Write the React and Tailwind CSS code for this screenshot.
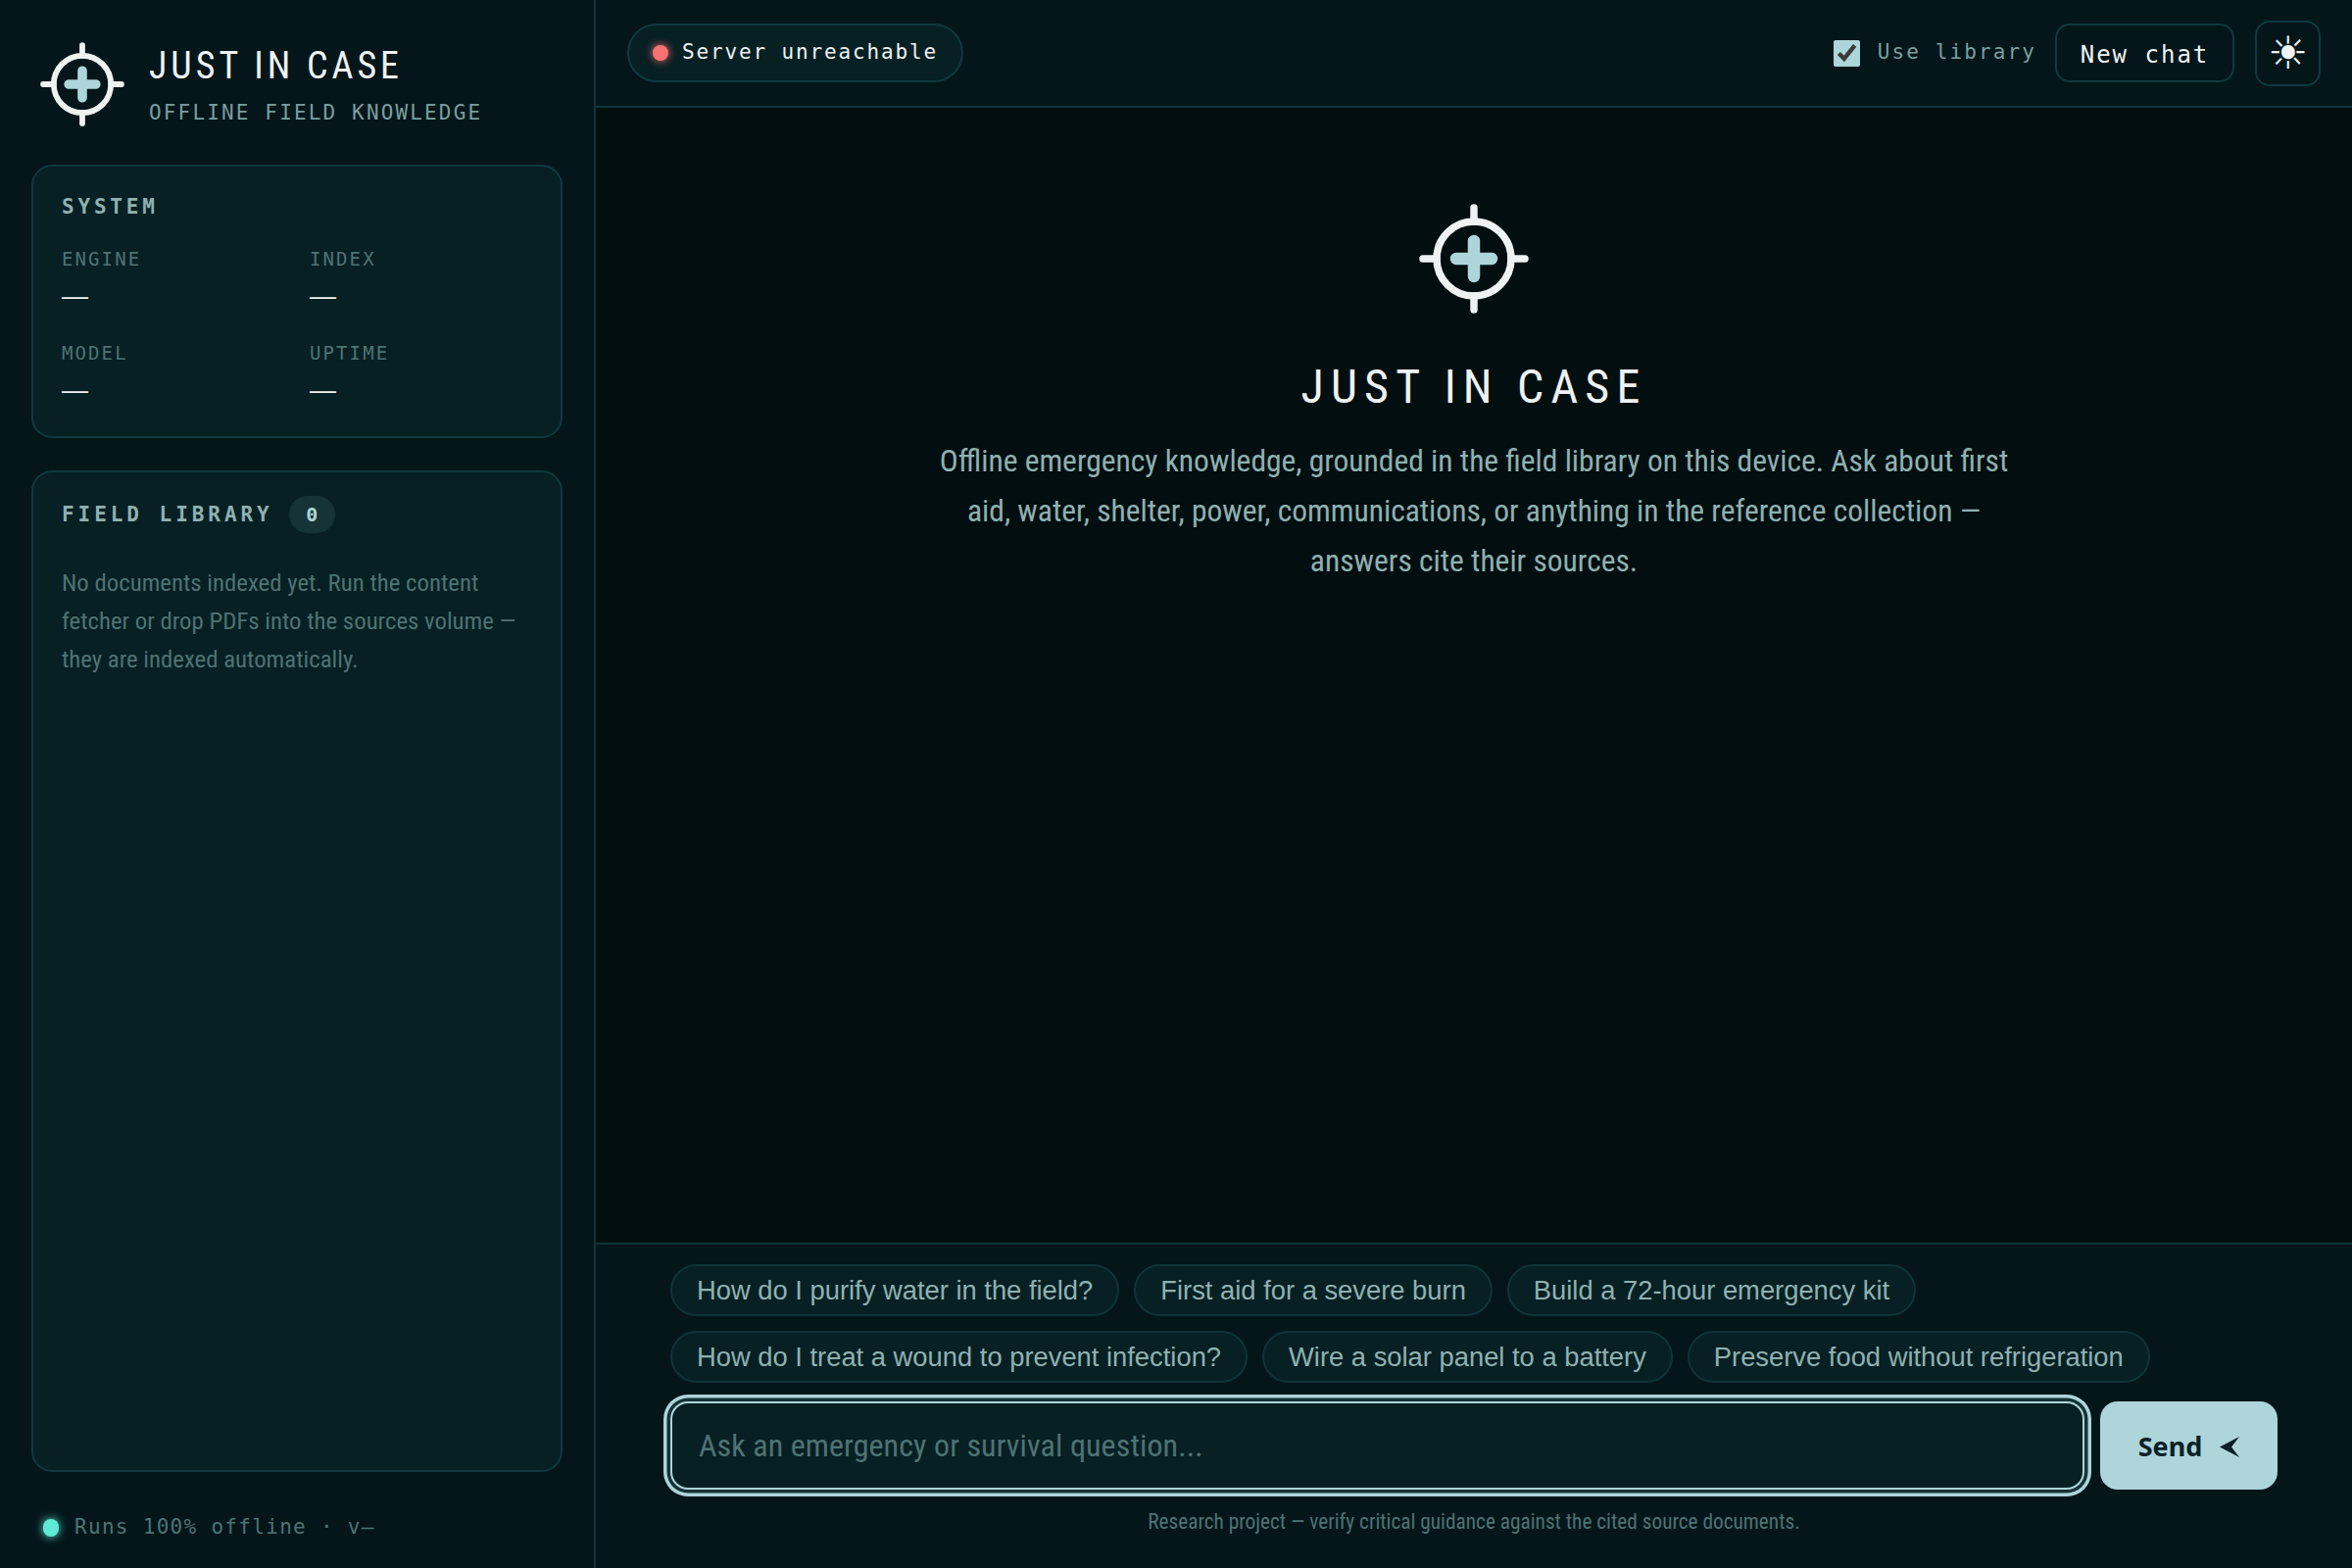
const chipsOne = ['How do I purify water in the field?', 'First aid for a severe burn', 'Build a 72-hour emergency kit']
const chipsTwo = ['How do I treat a wound to prevent infection?', 'Wire a solar panel to a battery', 'Preserve food without refrigeration']

function Logo({ className }) {
  return (
    <svg viewBox="0 0 112 112" fill="none" strokeLinecap="round" className={className}>
      <circle cx="56" cy="56" r="38" stroke="#eef2f2" strokeWidth="7.5" />
      <path d="M56 4V18M56 94V108M4 56H18M94 56H108" stroke="#eef2f2" strokeWidth="7.5" />
      <path d="M56 38V74M38 56H74" stroke="#add5da" strokeWidth="12.5" />
    </svg>
  )
}

function Stat({ label }) {
  return (
    <div>
      <div className="text-[19px] leading-[24px] tracking-[2.1px] text-[#4f7373]">{label}</div>
      <div className="mt-[10px] text-[27px] leading-[32px] text-[#eef2f2] font-['Liberation_Sans',sans-serif]">—</div>
    </div>
  )
}

function Chip({ text }) {
  return (
    <button className="h-[53px] px-[25px] rounded-full border-2 border-[#0f3438] bg-[#072024] text-[27.35px] text-[#8fb1b0] font-['Liberation_Sans',sans-serif] whitespace-nowrap">
      {text}
    </button>
  )
}

export default function App() {
  return (
    <div className="flex h-[1600px] w-[2400px] bg-[#020e10] font-['DejaVu_Sans_Mono',monospace] overflow-hidden">
      <aside className="w-[608px] shrink-0 flex flex-col border-r-2 border-[#0f3438] bg-[#04161a] px-[32px]">
        <div className="flex items-center h-[168px] pl-[9px] pt-[4px]">
          <Logo className="w-[86px] h-[86px] shrink-0" />
          <div className="ml-[25px] pt-[2px]">
            <div className="text-[38px] leading-[44px] tracking-[4px] text-[#eef2f2] font-['Roboto',sans-serif] font-[440] font-stretch-condensed">JUST IN CASE</div>
            <div className="mt-[12px] text-[21px] leading-[28px] tracking-[2.15px] text-[#7a9f9f]">OFFLINE FIELD KNOWLEDGE</div>
          </div>
        </div>

        <section className="h-[279px] rounded-[21px] border-2 border-[#0f3a3d] bg-[#072024] px-[29px] pt-[27px]">
          <h2 className="text-[21px] leading-[28px] font-bold tracking-[3.8px] text-[#8fb1b0]">SYSTEM</h2>
          <div className="mt-[27px] grid grid-cols-[253px_1fr] gap-y-[30px]">
            <Stat label="ENGINE" />
            <Stat label="INDEX" />
            <Stat label="MODEL" />
            <Stat label="UPTIME" />
          </div>
        </section>

        <section className="mt-[33px] flex-1 rounded-[21px] border-2 border-[#0f3a3d] bg-[#072024] px-[29px] pt-[24px]">
          <div className="flex items-center">
            <h2 className="text-[21px] leading-[28px] font-bold tracking-[3.95px] text-[#8fb1b0]">FIELD LIBRARY</h2>
            <span className="ml-[16px] w-[47px] h-[38px] rounded-full bg-[#163336] flex items-center justify-center text-[20px] font-bold text-[#add5da]">0</span>
          </div>
          <p className="mt-[31px] text-[24.8px] leading-[39px] text-[#4f7373] font-['Roboto',sans-serif] font-stretch-condensed">
            No documents indexed yet. Run the content fetcher or drop PDFs into the sources volume — they are indexed automatically.
          </p>
        </section>

        <div className="h-[98px] flex items-center pl-[12px] pt-[15px] text-[21px] tracking-[1.3px] text-[#4f7373]">
          <span className="w-[16px] h-[18px] rounded-full bg-[#5eead4] shadow-[0_0_10px_#5eead4] mr-[16px]" />
          Runs 100% offline · v—
        </div>
      </aside>

      <main className="flex-1 flex flex-col min-w-0">
        <header className="h-[110px] shrink-0 flex items-center border-b-2 border-[#0f3438] bg-[#04161a] pl-[32px] pr-[32px]">
          <div className="flex items-center h-[60px] pl-[24px] pr-[24px] rounded-full border-2 border-[#0f3a3d] bg-[#072024] text-[21px] tracking-[1.85px] text-[#eef2f2]">
            <span className="w-[16px] h-[16px] rounded-full bg-[#f87171] shadow-[0_0_8px_#f87171] mr-[14px]" />
            Server unreachable
          </div>
          <label className="ml-auto flex items-center text-[21px] tracking-[2.1px] text-[#7a9f9f]">
            <input type="checkbox" defaultChecked className="w-[27px] h-[27px] accent-[#add5da] mr-[18px]" />
            Use library
          </label>
          <button className="ml-[19px] h-[60px] w-[183px] pt-[3px] rounded-[15px] border-2 border-[#0f3a3d] text-[24px] tracking-[2px] text-[#eef2f2]">New chat</button>
          <button className="ml-[21px] w-[67px] h-[67px] rounded-[15px] border-2 border-[#0f3a3d] flex items-center justify-center text-[46px] leading-none text-[#eef2f2] font-['DejaVu_Sans',sans-serif]">
            ☀
          </button>
        </header>

        <div className="flex-1 flex flex-col items-center pt-[98px]">
          <Logo className="w-[112px] h-[112px]" />
          <h1 className="mt-[47px] text-[48px] leading-[56px] tracking-[7.2px] text-[#eef2f2] font-['Roboto',sans-serif] font-[440] font-stretch-condensed">JUST IN CASE</h1>
          <p className="mt-[22px] w-[1100px] text-center text-[31.5px] leading-[51px] text-[#8fb1b0] font-['Roboto',sans-serif] font-stretch-condensed">
            Offline emergency knowledge, grounded in the field library on this device. Ask about first aid, water, shelter, power, communications, or anything in the reference collection — answers cite their sources.
          </p>
        </div>

        <footer className="h-[332px] shrink-0 border-t-2 border-[#0f3438] bg-[#04161a] pt-[20px] flex flex-col items-center">
          <div className="w-[1640px]">
            <div className="flex gap-[15px]">
              {chipsOne.map((c) => <Chip key={c} text={c} />)}
            </div>
            <div className="flex gap-[15px] mt-[15px]">
              {chipsTwo.map((c) => <Chip key={c} text={c} />)}
            </div>
            <div className="flex items-center gap-[16px] mt-[19px]">
              <input
                placeholder="Ask an emergency or survival question..."
                className="flex-1 h-[90px] rounded-[18px] border-2 border-[#add5da] bg-[#072024] px-[27px] text-[32px] tracking-[0.1px] text-[#eef2f2] placeholder:text-[#4f7373] outline-none shadow-[0_0_0_3.5px_#163336,0_0_0_7px_#add5da] font-['Roboto',sans-serif] font-stretch-condensed"
              />
              <button className="w-[181px] h-[90px] pt-[2px] rounded-[18px] bg-[#add5da] flex items-center justify-center gap-[18px] text-[27px] font-bold text-[#0a1f29] font-['Noto_Sans',sans-serif]">
                Send
                <svg viewBox="0 0 20 21" className="w-[20px] h-[21px]" fill="#0a1f29"><path d="M0 10.5 20 0 12 10.5 20 21Z" /></svg>
              </button>
            </div>
            <p className="mt-[18px] text-center text-[21.3px] leading-[30px] text-[#4f7373] font-['Roboto',sans-serif] font-stretch-condensed">
              Research project — verify critical guidance against the cited source documents.
            </p>
          </div>
        </footer>
      </main>
    </div>
  )
}
